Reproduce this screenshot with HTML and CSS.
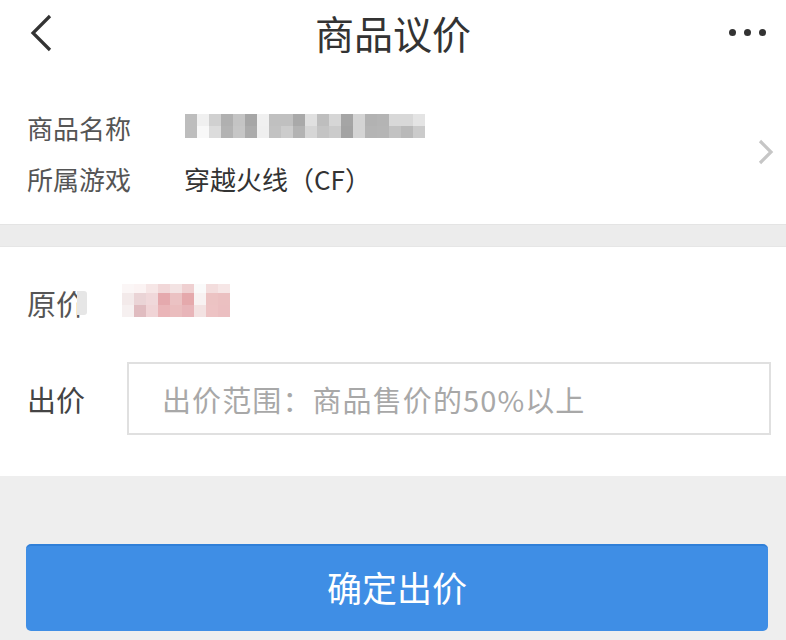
FILE: index.html
```html
<!DOCTYPE html>
<html lang="zh-CN">
<head>
<meta charset="utf-8">
<title>商品议价</title>
<link rel="stylesheet" href="styles.css">
</head>
<body>
<div class="page">
  <header class="topbar">
    <svg class="back" width="30" height="40" viewBox="0 0 30 40"><polyline points="22,4 5,21 22,38" fill="none" stroke="#333" stroke-width="3.2"/></svg>
    <h1 class="title">商品议价</h1>
    <div class="more"><span></span><span></span><span></span></div>
  </header>

  <section class="info">
    <div class="info-rows">
      <div class="row">
        <span class="label">商品名称</span>
        <div class="mosaic name-mosaic">
          <i style="background:#bdbdbd"></i><i style="background:#f0f0f0"></i><i style="background:#d0d0d0"></i><i style="background:#b0b0b0"></i><i style="background:#c4c4c4"></i><i style="background:#a6a6a6"></i><i style="background:#f0f0f0"></i><i style="background:#c0c0c0"></i><i style="background:#c0c0c0"></i><i style="background:#a9a9a9"></i><i style="background:#e0e0e0"></i><i style="background:#bebebe"></i><i style="background:#d6d6d6"></i><i style="background:#a5a5a5"></i><i style="background:#d4d4d4"></i><i style="background:#b2b2b2"></i><i style="background:#b4b4b4"></i><i style="background:#d8d8d8"></i><i style="background:#d8d8d8"></i><i style="background:#e4e4e4"></i>
          <i style="background:#bdbdbd"></i><i style="background:#f8f8f8"></i><i style="background:#dcdcdc"></i><i style="background:#b3b3b3"></i><i style="background:#c6c6c6"></i><i style="background:#ababab"></i><i style="background:#efefef"></i><i style="background:#c2c2c2"></i><i style="background:#cccccc"></i><i style="background:#b3b3b3"></i><i style="background:#d6d6d6"></i><i style="background:#c4c4c4"></i><i style="background:#cbcbcb"></i><i style="background:#a3a3a3"></i><i style="background:#d4d4d4"></i><i style="background:#b4b4b4"></i><i style="background:#b5b5b5"></i><i style="background:#c2c2c2"></i><i style="background:#b9b9b9"></i><i style="background:#cbcbcb"></i>
        </div>
      </div>
      <div class="row">
        <span class="label">所属游戏</span>
        <span class="value">穿越火线（CF）</span>
      </div>
    </div>
    <svg class="arrow" width="20" height="30" viewBox="0 0 20 30"><polyline points="4,3 15,14 4,25" fill="none" stroke="#c6c6c6" stroke-width="3.2"/></svg>
  </section>

  <div class="band"></div>

  <section class="price">
    <div class="row price-row">
      <span class="label short">原价</span><span class="stub"></span>
      <div class="mosaic price-mosaic">
        <i style="background:#fbf6f6"></i><i style="background:#fbf3f3"></i><i style="background:#f6e6e6"></i><i style="background:#f1d7d8"></i><i style="background:#f3e3e3"></i><i style="background:#efd0d1"></i><i style="background:#fafafa"></i><i style="background:#f3dddd"></i><i style="background:#f6e6e6"></i>
        <i style="background:#f3eaea"></i><i style="background:#ead4d6"></i><i style="background:#f0d8da"></i><i style="background:#e5a9ad"></i><i style="background:#ebc2c3"></i><i style="background:#e5a9ac"></i><i style="background:#f8f2f2"></i><i style="background:#ecc3c3"></i><i style="background:#ebc0c1"></i>
        <i style="background:#f6f0f0"></i><i style="background:#e0bcc0"></i><i style="background:#f0d4d6"></i><i style="background:#eab5b8"></i><i style="background:#eabdbe"></i><i style="background:#e8b5b9"></i><i style="background:#f3e2e2"></i><i style="background:#edc3c4"></i><i style="background:#ebbfc1"></i>
      </div>
    </div>
    <div class="row bid-row">
      <span class="label bid-label">出价</span>
      <div class="input"><span class="placeholder">出价范围：商品售价的50%以上</span></div>
    </div>
  </section>

  <footer class="actions">
    <button class="confirm">确定出价</button>
  </footer>
</div>
</body>
</html>
```

FILE: styles.css
```css
* { box-sizing: border-box; margin: 0; padding: 0; }
html, body { width: 786px; height: 640px; overflow: hidden; }
body {
  background: #eeeeee;
  font-family: "Noto Sans CJK SC", "Noto Sans", "Liberation Sans", sans-serif;
  color: #333;
}
.page { display: flex; flex-direction: column; height: 640px; }

.topbar {
  height: 66px;
  background: #fff;
  display: flex;
  align-items: center;
  justify-content: space-between;
  padding: 0 20px 0 28px;
  position: relative;
}
.back { display: block; margin-top: -2px; }
.title {
  position: absolute;
  left: 0; right: 0; top: 0;
  text-align: center;
  font-size: 39px;
  font-weight: 400;
  line-height: 64px;
  color: #333;
  pointer-events: none;
}
.more { display: flex; gap: 8px; margin-top: -2px; }
.more span { width: 7px; height: 7px; border-radius: 50%; background: #333; display: block; }

.info {
  background: #fff;
  height: 158px;
  display: flex;
  align-items: center;
  padding: 36px 10px 20px 27px;
}
.info-rows { flex: 1; display: flex; flex-direction: column; }
.row { display: flex; align-items: center; }
.info .row { height: 51px; }
.label { width: 158px; font-size: 26px; color: #555; flex-shrink: 0; }
.value { font-size: 26px; color: #333; margin-left: -1px; }
.arrow { display: block; }

.mosaic { display: grid; }
.mosaic i { display: block; }
.name-mosaic { grid-template-columns: repeat(20, 12px); grid-auto-rows: 12px; margin-top: -4px; }
.price-mosaic { grid-template-columns: repeat(9, 12px); grid-template-rows: 9px 12px 12px; margin-left: 35px; margin-top: -6px; }

.band { height: 23px; background: #ececec; border-top: 1px solid #e4e4e4; border-bottom: 1px solid #e6e6e6; }

.price {
  background: #fff;
  height: 229px;
  padding: 33px 15px 0 27px;
  display: flex;
  flex-direction: column;
}
.price-row { height: 46px; }
.label.short { width: auto; font-size: 29px; }
.stub { width: 10px; height: 24px; background: #e6e6e6; border-radius: 0 3px 3px 0; display: block; margin-left: -8px; }
.bid-row { margin-top: 36px; }
.bid-label { width: 100px; font-size: 29px; color: #444; }
.input {
  flex: 1;
  height: 73px;
  border: 2px solid #e0e0e0;
  display: flex;
  align-items: center;
  padding-left: 33px;
}
.placeholder { font-size: 29px; color: #a8a8a8; letter-spacing: 1.1px; }

.actions { flex: 1; padding: 68px 18px 0 26px; }
.confirm {
  display: block;
  width: 100%;
  height: 87px;
  border: none;
  border-radius: 5px;
  background: #3f8ee5;
  color: #fff;
  font-family: inherit;
  font-size: 35px;
  padding-bottom: 5px;
  border-top: 2px solid #2f7fd8;
}
```
